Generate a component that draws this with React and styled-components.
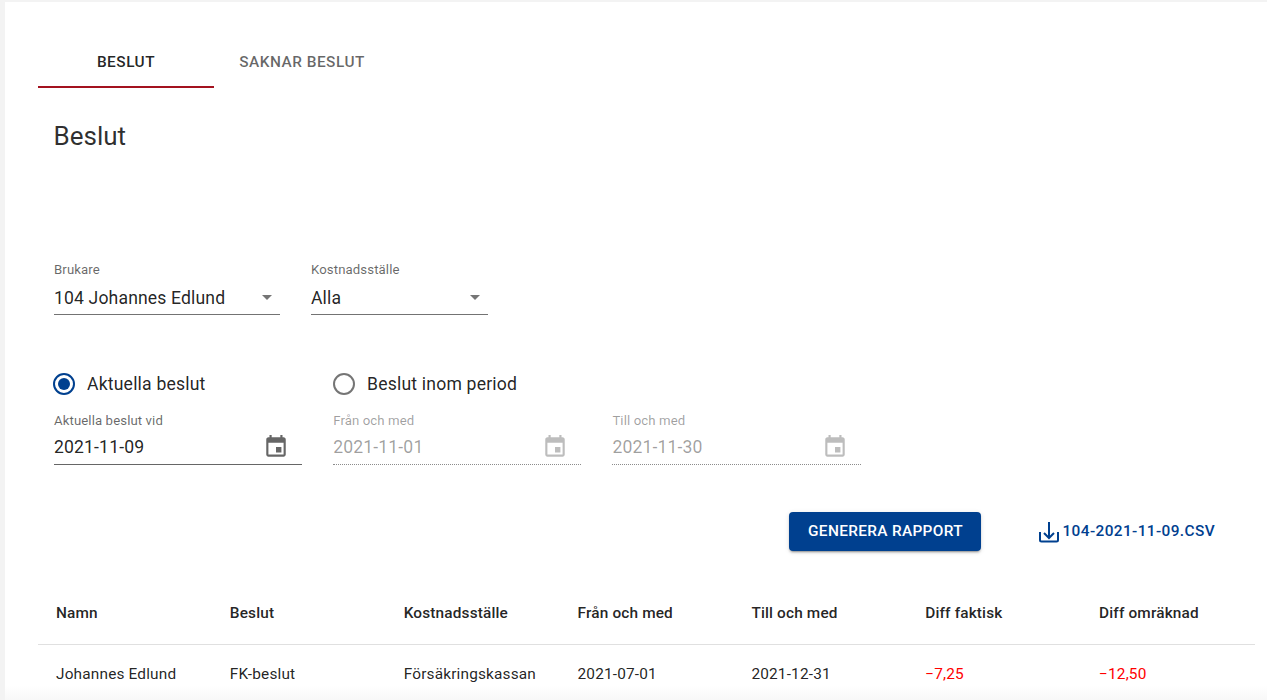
import React from 'react';
import styled, { createGlobalStyle } from 'styled-components';

const columns = ['Namn', 'Beslut', 'Kostnadsställe', 'Från och med', 'Till och med', 'Diff faktisk', 'Diff omräknad'];

const row = [
  { id: 'namn', text: 'Johannes Edlund' },
  { id: 'beslut', text: 'FK-beslut' },
  { id: 'kst', text: 'Försäkringskassan' },
  { id: 'from', text: '2021-07-01' },
  { id: 'tom', text: '2021-12-31' },
  { id: 'faktisk', text: '−7,25', negative: true },
  { id: 'omraknad', text: '−12,50', negative: true },
];

const CalendarIcon = () => (
  <svg width="26" height="26" viewBox="0 0 24 24" fill="currentColor">
    <path d="M17 12h-5v5h5v-5zM16 1v2H8V1H6v2H5c-1.11 0-1.99.9-1.99 2L3 19c0 1.1.89 2 2 2h14c1.1 0 2-.9 2-2V5c0-1.1-.9-2-2-2h-1V1h-2zm3 18H5V8h14v11z" />
  </svg>
);

const DownloadIcon = () => (
  <svg width="22" height="22" viewBox="0 0 22 22" fill="none" stroke="currentColor" strokeWidth="2">
    <path d="M11 1v16M6 12l5 5 5-5" />
    <path d="M2 11v8a1.5 1.5 0 0 0 1.5 1.5h15A1.5 1.5 0 0 0 20 19v-8" />
  </svg>
);

const DateInput = ({ label, value, disabled }) => (
  <DateField>
    <FieldLabel $disabled={disabled}>{label}</FieldLabel>
    <DateValueRow $disabled={disabled}>
      <FieldValue $disabled={disabled}>{value}</FieldValue>
      <CalendarButton $disabled={disabled}>
        <CalendarIcon />
      </CalendarButton>
    </DateValueRow>
  </DateField>
);

const SelectInput = ({ label, value, width }) => (
  <SelectField $width={width}>
    <FieldLabel>{label}</FieldLabel>
    <SelectRow>
      <FieldValue>{value}</FieldValue>
      <Caret />
    </SelectRow>
  </SelectField>
);

const App = () => {
  return (
    <>
      <GlobalStyle />
      <Page>
        <Card>
          <Tabs>
            <Tab $active>Beslut</Tab>
            <Tab>Saknar beslut</Tab>
          </Tabs>

          <Content>
            <Title>Beslut</Title>

            <SelectRowWrap>
              <SelectInput label="Brukare" value="104 Johannes Edlund" width={226} />
              <SelectInput label="Kostnadsställe" value="Alla" width={177} />
            </SelectRowWrap>

            <RadioRow>
              <RadioOption>
                <Radio $checked />
                Aktuella beslut
              </RadioOption>
              <RadioOption>
                <Radio />
                Beslut inom period
              </RadioOption>
            </RadioRow>

            <DateRow>
              <DateInput label="Aktuella beslut vid" value="2021-11-09" />
              <DateInput label="Från och med" value="2021-11-01" disabled />
              <DateInput label="Till och med" value="2021-11-30" disabled />
            </DateRow>
          </Content>

          <Actions>
            <PrimaryButton>Generera rapport</PrimaryButton>
            <CsvLink>
              <DownloadIcon />
              <CsvText>104-2021-11-09.csv</CsvText>
            </CsvLink>
          </Actions>

          <Table>
            <HeadRow>
              {columns.map((name) => (
                <HeadCell key={name}>{name}</HeadCell>
              ))}
            </HeadRow>
            <BodyRow>
              {row.map((cell) => (
                <BodyCell key={cell.id} $negative={cell.negative}>
                  {cell.text}
                </BodyCell>
              ))}
            </BodyRow>
          </Table>
          <BottomFade />
        </Card>
      </Page>
    </>
  );
};

const GlobalStyle = createGlobalStyle`
  html, body {
    margin: 0;
    padding: 0;
    height: 100%;
    overflow: hidden;
    background: #f3f3f3;
    font-family: Roboto, "Liberation Sans", sans-serif;
    color: rgba(0, 0, 0, 0.87);
  }
  * {
    box-sizing: border-box;
  }
`;

const Page = styled.div`
  height: 700px;
  padding: 2px 0 0 5px;
  overflow: hidden;
`;

const Card = styled.div`
  position: relative;
  height: 698px;
  background: #fff;
  padding: 33px 12px 0 33px;
  overflow: hidden;
`;

const Tabs = styled.div`
  display: flex;
  height: 53px;
  width: 352px;
`;

const Tab = styled.div`
  width: 176px;
  display: flex;
  align-items: center;
  justify-content: center;
  padding-top: 2px;
  font-size: 15.4px;
  font-weight: 500;
  letter-spacing: 0.5px;
  text-transform: uppercase;
  color: ${(p) => (p.$active ? 'rgba(0, 0, 0, 0.87)' : 'rgba(0, 0, 0, 0.6)')};
  border-bottom: 2px solid ${(p) => (p.$active ? '#a3121f' : 'transparent')};
`;

const Content = styled.div`
  padding: 0 0 0 16px;
`;

const Title = styled.h1`
  margin: 32px 0 0 -0.5px;
  height: 32px;
  font-size: 26px;
  line-height: 32px;
  font-weight: 400;
  color: rgba(0, 0, 0, 0.82);
`;

const SelectRowWrap = styled.div`
  display: flex;
  gap: 31px;
  margin-top: 111px;
`;

const SelectField = styled.div`
  width: ${(p) => p.$width}px;
`;

const FieldLabel = styled.div`
  font-size: 13.2px;
  line-height: 14px;
  letter-spacing: 0.1px;
  color: ${(p) => (p.$disabled ? 'rgba(0, 0, 0, 0.38)' : 'rgba(0, 0, 0, 0.6)')};
`;

const SelectRow = styled.div`
  display: flex;
  align-items: center;
  justify-content: space-between;
  height: 38px;
  padding-top: 4px;
  border-bottom: 1px solid rgba(0, 0, 0, 0.55);
`;

const FieldValue = styled.span`
  font-size: 17.6px;
  line-height: 24px;
  letter-spacing: 0.14px;
  color: ${(p) => (p.$disabled ? 'rgba(0, 0, 0, 0.38)' : 'rgba(0, 0, 0, 0.87)')};
`;

const Caret = styled.span`
  width: 0;
  height: 0;
  margin-right: 8px;
  border-left: 5px solid transparent;
  border-right: 5px solid transparent;
  border-top: 5px solid rgba(0, 0, 0, 0.54);
`;

const RadioRow = styled.div`
  display: flex;
  margin-top: 57px;
  margin-left: -1px;
`;

const RadioOption = styled.label`
  width: 280px;
  display: flex;
  align-items: center;
  gap: 12px;
  height: 24px;
  font-size: 17.6px;
  letter-spacing: 0.19px;
  color: rgba(0, 0, 0, 0.87);
`;

const Radio = styled.span`
  position: relative;
  width: 22px;
  height: 22px;
  border-radius: 50%;
  border: 2px solid ${(p) => (p.$checked ? '#00408f' : 'rgba(0, 0, 0, 0.54)')};

  &::after {
    content: '';
    display: ${(p) => (p.$checked ? 'block' : 'none')};
    position: absolute;
    inset: 3px;
    border-radius: 50%;
    background: #00408f;
  }
`;

const DateRow = styled.div`
  display: flex;
  gap: 31px;
  margin-top: 18px;
`;

const DateField = styled.div`
  width: 248.2px;
`;

const DateValueRow = styled.div`
  display: flex;
  align-items: center;
  justify-content: space-between;
  height: 37px;
  padding-top: 2px;
  border-bottom: 1px ${(p) => (p.$disabled ? 'dotted rgba(0, 0, 0, 0.45)' : 'solid rgba(0, 0, 0, 0.6)')};
`;

const CalendarButton = styled.span`
  display: flex;
  margin-right: 13px;
  color: ${(p) => (p.$disabled ? 'rgba(0, 0, 0, 0.26)' : 'rgba(0, 0, 0, 0.6)')};
`;

const Actions = styled.div`
  display: flex;
  align-items: center;
  justify-content: flex-end;
  gap: 57px;
  margin-top: 47px;
  padding-right: 40px;
`;

const PrimaryButton = styled.div`
  width: 192px;
  height: 39px;
  display: flex;
  align-items: center;
  justify-content: center;
  padding-bottom: 2px;
  border-radius: 4px;
  background: #00408f;
  color: #fff;
  font-size: 15.4px;
  font-weight: 500;
  letter-spacing: 0.33px;
  text-transform: uppercase;
  box-shadow: 0 3px 1px -2px rgba(0, 0, 0, 0.2), 0 2px 2px 0 rgba(0, 0, 0, 0.14), 0 1px 5px 0 rgba(0, 0, 0, 0.12);
`;

const CsvLink = styled.div`
  display: flex;
  align-items: center;
  gap: 2px;
  color: #00408f;
`;

const CsvText = styled.span`
  padding-bottom: 2px;
  font-size: 15.4px;
  font-weight: 500;
  letter-spacing: 0.39px;
  text-transform: uppercase;
`;

const Table = styled.div`
  margin-top: 37px;
  width: 1217px;
`;

const HeadRow = styled.div`
  display: grid;
  grid-template-columns: repeat(7, 173.85px);
  height: 57px;
  padding-bottom: 6px;
  align-items: center;
  border-bottom: 1px solid #e0e0e0;
`;

const HeadCell = styled.div`
  padding-left: 18px;
  font-size: 15.4px;
  font-weight: 500;
  letter-spacing: 0.15px;
  color: rgba(0, 0, 0, 0.87);
`;

const BodyRow = styled.div`
  display: grid;
  grid-template-columns: repeat(7, 173.85px);
  height: 57px;
  align-items: center;
`;

const BodyCell = styled.div`
  padding-left: 18px;
  font-size: 15.4px;
  letter-spacing: 0.17px;
  color: ${(p) => (p.$negative ? '#ff0000' : 'rgba(0, 0, 0, 0.87)')};
`;

const BottomFade = styled.div`
  position: absolute;
  left: 0;
  right: 0;
  bottom: 0;
  height: 14px;
  background: linear-gradient(to bottom, rgba(243, 243, 243, 0), rgba(243, 243, 243, 0.6));
`;

export default App;
